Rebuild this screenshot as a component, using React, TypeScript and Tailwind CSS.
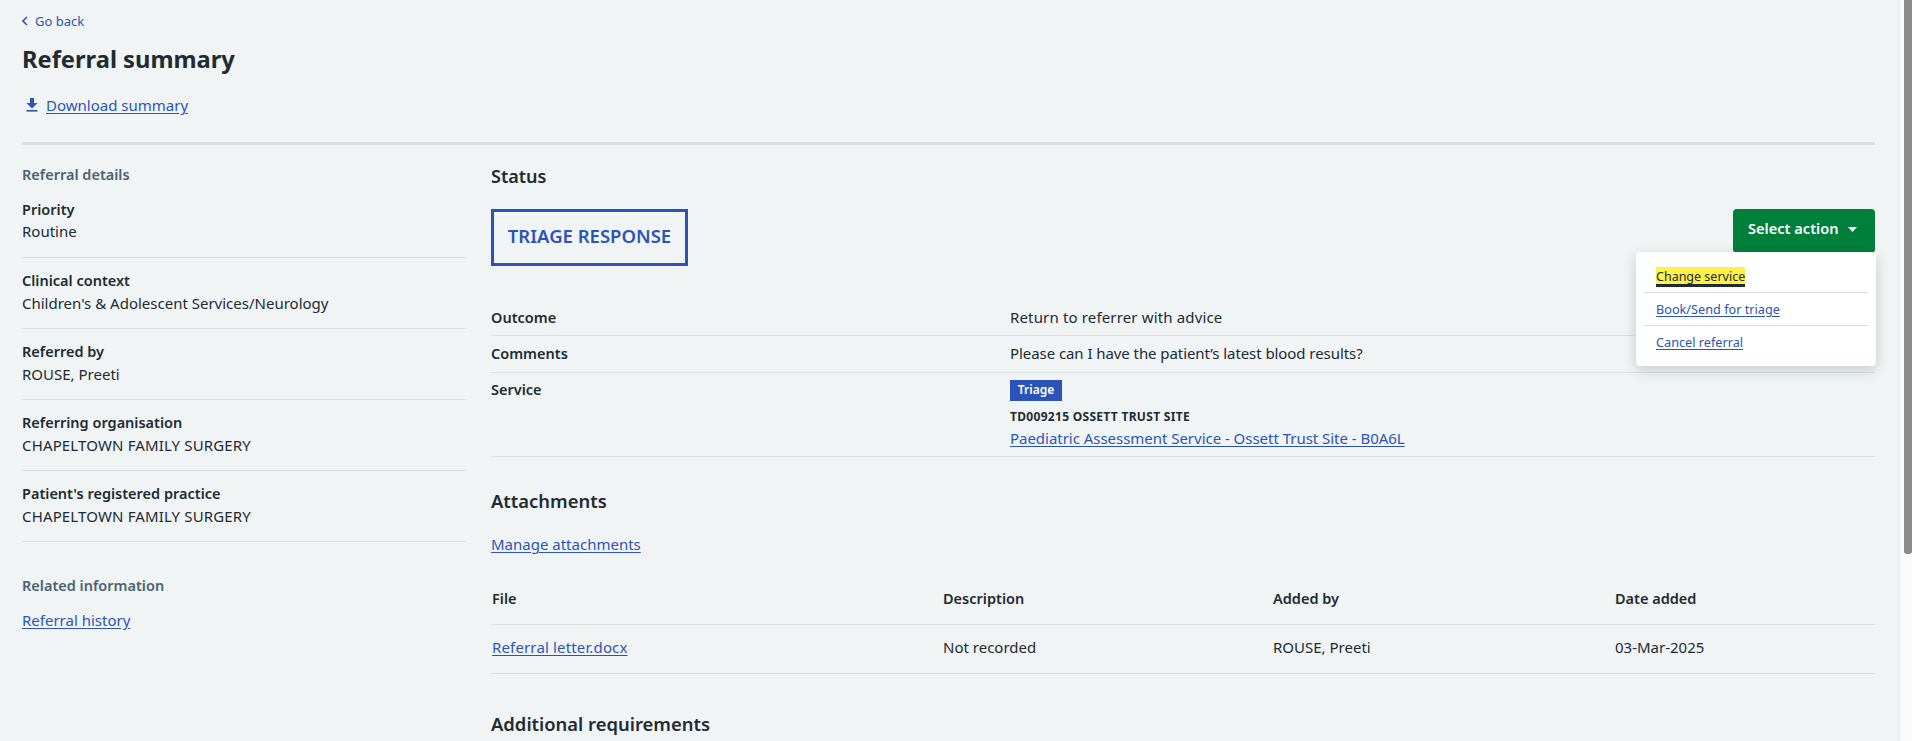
import React from 'react';

const font = { fontFamily: '"Noto Sans", "Open Sans", sans-serif' };

function Detail({ label, value, valueClass = 'leading-[24px]' }: { label: string, value: string, valueClass?: string }) {
  return (
    <div className="border-b border-[#d8dde0] h-[60px] mb-[11px]">
      <p className="text-[14.5px] leading-[22px] font-semibold text-[#212b32]">{label}</p>
      <p className={`text-[15px] text-[#212b32] ${valueClass}`}>{value}</p>
    </div>
  );
}

function SummaryRow({ label, children, className }: { label: string, children: React.ReactNode, className: string }) {
  return (
    <div className={`flex border-b border-[#d8dde0] ${className}`}>
      <div className="w-[519px] text-[14.5px] leading-[22px] font-semibold text-[#212b32]">{label}</div>
      <div className="flex-1 text-[15px] leading-[22px] text-[#212b32]">{children}</div>
    </div>
  );
}

function Link({ children, className = '' }: { children: React.ReactNode, className?: string }) {
  return <a href="#" className={`text-[#2c54b8] underline underline-offset-2 ${className}`}>{children}</a>;
}

export default function App() {
  return (
    <div className="h-[741px] flex overflow-hidden bg-[#f0f4f5] text-[#212b32]" style={font}>
      <main className="flex-1 pl-[22px] pr-[26px] relative overflow-hidden">
        <a href="#" className="flex items-center gap-[7px] pt-[10px] h-[32px] text-[13px] leading-[18px] text-[#2c54b8]">
          <svg width="6" height="10" viewBox="0 0 6 10" fill="none" stroke="#2c54b8" strokeWidth="1.6"><path d="M5 1 1 5l4 4" /></svg>
          Go back
        </a>
        <h1 className="mt-[11px] text-[23.7px] leading-[32px] font-bold">Referral summary</h1>
        <div className="mt-[18px] flex items-center gap-[8px] pl-[4px] h-[24px]">
          <svg width="12" height="14" viewBox="0 0 12 14" fill="#2c54b8"><path d="M4 0h4v5h3.5L6 10.5.5 5H4z" /><rect x="0.5" y="12" width="11" height="1.6" /></svg>
          <Link className="text-[15px] leading-[22px]">Download summary</Link>
        </div>
        <div className="mt-[25px] h-[3px] bg-[#d8dde0]" />

        <div className="flex mt-[19px]">
          <aside className="w-[444px] mr-[25px] shrink-0">
            <h2 className="-mt-[1px] text-[14.5px] leading-[22px] font-semibold text-[#4c6272] mb-[13px]">Referral details</h2>
            <Detail label="Priority" value="Routine" valueClass="leading-[22px]" />
            <Detail label="Clinical context" value="Children's & Adolescent Services/Neurology" />
            <Detail label="Referred by" value="ROUSE, Preeti" />
            <Detail label="Referring organisation" value="CHAPELTOWN FAMILY SURGERY" valueClass="leading-[24px] tracking-[0.15px]" />
            <Detail label="Patient's registered practice" value="CHAPELTOWN FAMILY SURGERY" valueClass="leading-[24px] tracking-[0.15px]" />
            <h2 className="mt-[32px] text-[14.5px] leading-[22px] font-semibold text-[#4c6272]">Related information</h2>
            <p className="mt-[13px] text-[15px] leading-[22px]"><Link>Referral history</Link></p>
          </aside>

          <section className="flex-1 min-w-0">
            <h2 className="text-[18px] leading-[24px] font-semibold">Status</h2>
            <div className="flex items-start justify-between mt-[21px] h-[86px]">
              <div className="border-[3px] border-[#2c54b8] h-[57px] w-[197px] flex items-center justify-center pb-[3px] text-[18.5px] font-semibold text-[#2c54b8]">TRIAGE RESPONSE</div>
              <button className="w-[142px] h-[44px] bg-[#007f3b] rounded-[4px] pl-[15px] pb-[4px] text-white text-[14.6px] font-semibold flex items-center gap-[9px]">
                Select action
                <svg width="9" height="5" viewBox="0 0 9 5" fill="#fff"><path d="M0 0h9L4.5 5z" /></svg>
              </button>
            </div>
            <SummaryRow label="Outcome" className="h-[41px] pt-[11px]"><span className="tracking-[0.15px]">Return to referrer with advice</span></SummaryRow>
            <SummaryRow label="Comments" className="h-[37px] pt-[6px]"><span className="tracking-[-0.07px]">Please can I have the patient’s latest blood results?</span></SummaryRow>
            <SummaryRow label="Service" className="h-[84px] pt-[5px]">
              <span className="block w-[52px] h-[21px] bg-[#2c54b8] text-white text-[12px] leading-[20px] font-semibold text-center mt-[2px]">Triage</span>
              <span className="block mt-[8px] text-[12px] leading-[16px] font-bold tracking-[0.3px]">TD009215 OSSETT TRUST SITE</span>
              <span className="block leading-[20px] mt-[3px] tracking-[-0.03px]"><Link>Paediatric Assessment Service - Ossett Trust Site - B0A6L</Link></span>
            </SummaryRow>

            <h2 className="mt-[32px] text-[18.4px] leading-[24px] font-semibold">Attachments</h2>
            <p className="mt-[20px] text-[15px] leading-[22px]"><Link>Manage attachments</Link></p>

            <div className="grid grid-cols-[452px_330px_342px_1fr] mt-[32px] text-[15px] leading-[22px]">
              <div className="text-[14.5px] font-semibold border-b border-[#d8dde0] h-[38px] pl-[1px]">File</div>
              <div className="text-[14.5px] font-semibold border-b border-[#d8dde0] h-[38px]">Description</div>
              <div className="text-[14.5px] font-semibold border-b border-[#d8dde0] h-[38px]">Added by</div>
              <div className="text-[14.5px] font-semibold border-b border-[#d8dde0] h-[38px]">Date added</div>
              <div className="border-b border-[#d8dde0] h-[49px] pt-[11px] pl-[1px]"><Link className="tracking-[0.15px]">Referral letter.docx</Link></div>
              <div className="border-b border-[#d8dde0] h-[49px] pt-[11px]">Not recorded</div>
              <div className="border-b border-[#d8dde0] h-[49px] pt-[11px]">ROUSE, Preeti</div>
              <div className="border-b border-[#d8dde0] h-[49px] pt-[11px]">03-Mar-2025</div>
            </div>

            <h2 className="mt-[38px] text-[18.4px] leading-[24px] font-semibold">Additional requirements</h2>
          </section>
        </div>

        {/* Open action menu */}
        <div className="absolute top-[252px] right-[25px] w-[240px] h-[114px] bg-white rounded-[4px] shadow-[0_4px_14px_rgba(33,43,50,0.2)] px-[8px] text-[12.7px] leading-[18px]">
          <div className="h-[41px] border-b border-[#d8dde0] pt-[15px] pl-[12px]">
            <a href="#" className="block w-fit bg-[#fff04a] text-[#212b32] text-[12.5px] h-[17px] leading-[19px] shadow-[0_3px_0_#212b32]">Change service</a>
          </div>
          <div className="h-[33px] border-b border-[#d8dde0] pt-[7px] pl-[12px]"><Link>Book/Send for triage</Link></div>
          <div className="pt-[7px] pl-[12px]"><Link>Cancel referral</Link></div>
        </div>
      </main>

      {/* Scrollbar */}
      <div className="w-[11px] shrink-0 bg-[#fafafa] pl-[3px]">
        <div className="h-[554px] bg-[#8a8a8a] rounded-b-[3px]" />
      </div>
    </div>
  );
}
